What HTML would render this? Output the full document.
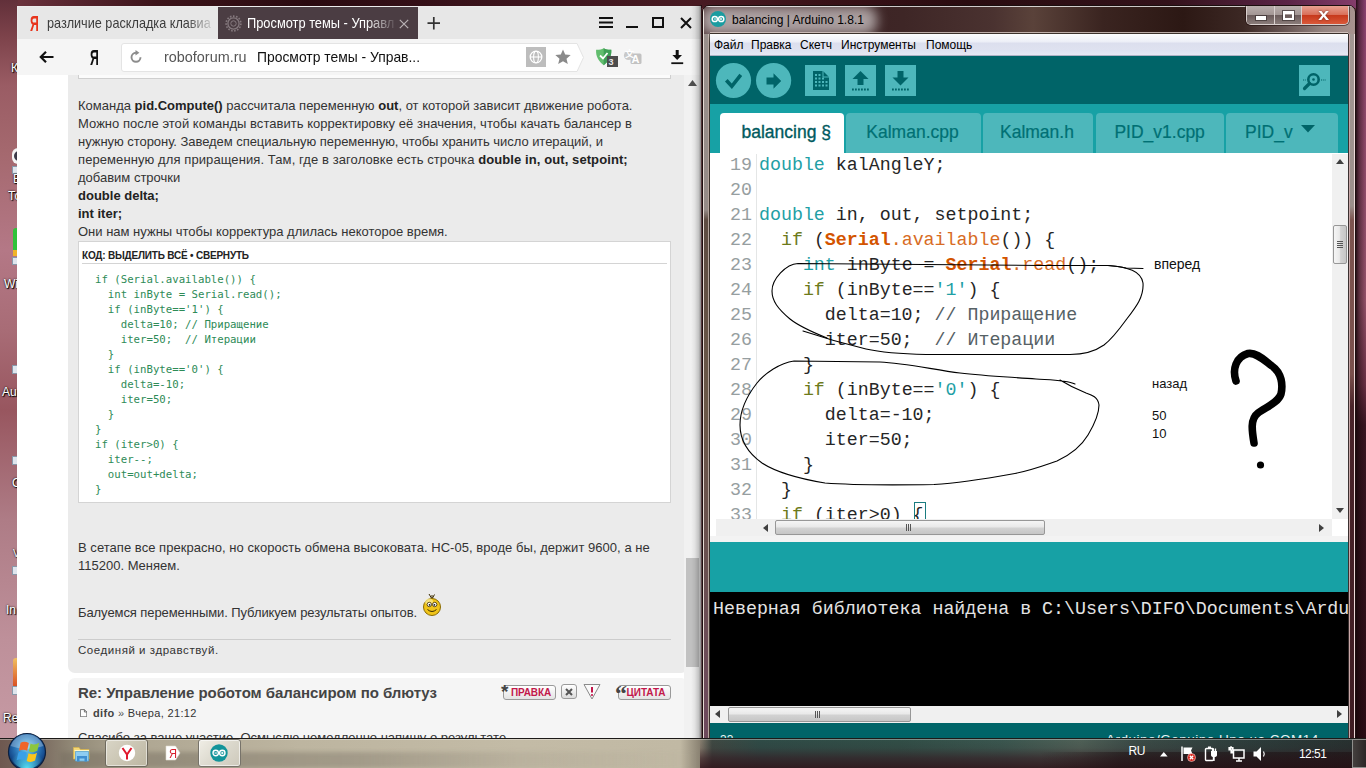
<!DOCTYPE html>
<html lang="ru"><head><meta charset="utf-8"><title>desktop</title>
<style>
*{box-sizing:border-box;margin:0;padding:0}
html,body{width:1366px;height:768px;overflow:hidden}
body{position:relative;font-family:"Liberation Sans","DejaVu Sans",sans-serif;background:#2b0e12}
.abs{position:absolute}
#desk{left:0;top:0;width:1366px;height:768px;background:linear-gradient(180deg,#62303a 0,#7c424a 35px,#9a5c64 85px,#a4686e 150px,#b47886 250px,#a86c76 330px,#98565f 410px,#ae7c86 520px,#be909a 640px,#c69aa4 740px)}
#deskR{left:1356px;top:0;width:10px;height:768px;background:linear-gradient(90deg,rgba(20,5,8,.85) 0,rgba(20,5,8,.45) 3px,rgba(20,5,8,0) 10px),linear-gradient(180deg,#8a4070 0,#90486c 80px,#95526a 300px,#6a3044 385px,#3a1622 425px,#2a0c14 768px)}
#deskTop{left:18px;top:0;width:1348px;height:8px;background:linear-gradient(90deg,#6a323c 0,#582630 50px,#3c141a 140px,#2a0a10 290px,#38121a 440px,#481a22 680px,#3a1218 800px,#2a0c10 950px,#33121a 1150px,#5a2446 1270px,#8a4070 1348px)}
/* ---------- browser ---------- */
#br{left:18px;top:7px;width:683px;height:733px;background:#fff;overflow:hidden}
#br .tabs{left:0;top:0;width:683px;height:32px;background:#e7e7e7}
#br .tab1{left:0;top:0;width:200px;height:32px;font-size:15px;color:#3c3c3c;line-height:32px;white-space:nowrap;overflow:hidden}
#br .tab2{left:200px;top:0;width:200px;height:32px;background:#4b3d43;color:#fff;font-size:15px;line-height:32px;white-space:nowrap;overflow:hidden}
#br .bar{left:0;top:32px;width:683px;height:36px;background:#f5f5f5}
#br .addr{left:104px;top:36px;width:452px;height:28px;background:#fff}
#br .page{left:0;top:68px;width:666px;height:665px;background:#fff;overflow:hidden}
#br .post{left:50px;top:0;width:620px;height:598px;background:#ebebeb;border-radius:0 0 7px 7px}
#br .post2{left:50px;top:603px;width:620px;height:80px;background:#f5f5f5;border-radius:7px 7px 0 0}
.ft{font-family:"Liberation Sans","DejaVu Sans",sans-serif;font-size:13px;color:#333;white-space:nowrap;line-height:18px}
.ft b{color:#222}
/* ---------- arduino ---------- */
#ar{left:702px;top:5px;width:654px;height:740px;border-radius:7px 7px 0 0;overflow:hidden;border:1px solid #1c0e0e;
background:
 linear-gradient(90deg,#e6dad4 0,#e6dad4 1px,rgba(0,0,0,0) 1px) 0 0/2px 100% no-repeat,
 linear-gradient(90deg,#6b5848 0,#6b5848 4px,#b5a59d 4px,#b5a59d 5px,#3c322c 5px,#3c322c 6px,rgba(0,0,0,0) 6px) 1px 28px/7px 100% no-repeat,
 linear-gradient(90deg,#3a3030 0,#3a3030 1px,#c8a8a8 1px,#c8a8a8 2px,#7a504c 2px,#7a504c 6px,#ecd8d8 6px) 645px 28px/7px 100% no-repeat,
 linear-gradient(180deg,rgba(255,255,255,.75) 0,rgba(255,255,255,.75) 1px,rgba(255,255,255,0) 1px) 0 0/100% 2px no-repeat,
 linear-gradient(90deg,#4a3032 0,#3c2224 120px,#3e2626 200px,#4a3230 290px,#5a423a 330px,#3a2420 400px,#2c1814 480px,#3c2824 540px,#6a5856 585px,#94837f 620px,#a8938f 652px)}
#ar .cl{left:7px;top:28px;width:638px;height:711px;background:#fff;overflow:hidden;box-shadow:0 -1px 0 #3c322c,0 -2px 0 rgba(220,205,200,.8)}
.mono{font-family:"Liberation Mono","DejaVu Sans Mono",monospace}
/* ---------- taskbar ---------- */
#tb{left:0;top:738px;width:1366px;height:30px;background:#6b5a52}
.tfade{-webkit-mask-image:linear-gradient(90deg,#000 0,#000 165px,transparent 200px);mask-image:linear-gradient(90deg,#000 0,#000 165px,transparent 200px)}
.ln{font-size:18.3px;line-height:25px;color:#969ea0;text-align:right;white-space:pre}
.cd{font-size:18.3px;line-height:25px;color:#262626}
.cd i{font-style:normal}.cd b{font-weight:bold}
.k1{color:#1fa0a5}.k2{color:#6c7a1a}.k3{color:#d35400}.k4{color:#d86c24}.k5{color:#1fa0a5}.k6{color:#566165}
</style></head><body>
<div id="desk" class="abs"></div>
<div id="deskTop" class="abs"></div>
<div id="deskR" class="abs"></div>

<div id="dicons" class="abs" style="left:0;top:0;width:18px;height:740px;overflow:hidden;font-size:12px;line-height:14px;color:#fff;text-shadow:1px 1px 1px #000,0 0 2px #000;white-space:nowrap">
 <div class="abs" style="left:11px;top:61px">К</div>
 <div class="abs" style="left:12px;top:148px;width:12px;height:16px;border-radius:6px 0 0 6px;background:#f4f4f4"></div>
 <div class="abs" style="left:14px;top:151px;width:10px;height:10px;border-radius:5px 0 0 5px;background:#3a3a48"></div>
 <div class="abs" style="left:12px;top:166px;width:8px;height:8px;background:#dfe6ee;border:1px solid #8899aa"></div>
 <div class="abs" style="left:13px;top:172px">Е</div>
 <div class="abs" style="left:8px;top:189px">То</div>
 <div class="abs" style="left:13px;top:228px;width:8px;height:22px;background:#2fc23a;border-radius:3px 0 0 0"></div>
 <div class="abs" style="left:13px;top:250px;width:8px;height:6px;background:#f0b428"></div>
 <div class="abs" style="left:12px;top:257px;width:8px;height:8px;background:#dfe6ee;border:1px solid #8899aa"></div>
 <div class="abs" style="left:4px;top:277px">Wi</div>
 <div class="abs" style="left:12px;top:365px;width:8px;height:9px;background:#dfe6ee;border:1px solid #8899aa"></div>
 <div class="abs" style="left:2px;top:385px">Au</div>
 <div class="abs" style="left:12px;top:456px;width:8px;height:9px;background:#dfe6ee;border:1px solid #8899aa"></div>
 <div class="abs" style="left:12px;top:476px">С</div>
 <div class="abs" style="left:13px;top:547px;font-size:10px">V</div>
 <div class="abs" style="left:12px;top:566px;width:8px;height:9px;background:#dfe6ee;border:1px solid #8899aa"></div>
 <div class="abs" style="left:6px;top:603px">In</div>
 <div class="abs" style="left:13px;top:658px;width:8px;height:30px;background:linear-gradient(180deg,#f0c060,#d84a20);border-radius:3px 0 0 3px"></div>
 <div class="abs" style="left:12px;top:686px;width:8px;height:9px;background:#dfe6ee;border:1px solid #8899aa"></div>
 <div class="abs" style="left:3px;top:711px">Re</div>
</div>
<div class="abs" style="left:17px;top:6px;width:684px;height:1px;background:#ececec"></div>
<div class="abs" style="left:17px;top:6px;width:1px;height:732px;background:linear-gradient(180deg,#ececec 0,#ececec 33px,#f5f5f5 33px,#f5f5f5 69px,#fff 69px)"></div>
<!-- BROWSER -->
<div id="br" class="abs">
 <div class="tabs abs"></div>
 <div class="tab1 abs"><span class="abs" style="left:11.500px;top:1px;color:#e8341c;font-size:21.500px;font-weight:bold;transform:scaleX(.57);transform-origin:0 50%">Я</span><span class="abs tfade" style="left:29px;top:0;transform:scaleX(.845);transform-origin:0 50%">различие раскладка клавиа</span></div>
 <div class="tab2 abs">
  <svg class="abs" style="left:7px;top:8px" width="17" height="17" viewBox="0 0 17 17"><circle cx="8.5" cy="8.5" r="5.6" fill="none" stroke="#85797e" stroke-width="1.3"/><circle cx="8.5" cy="8.5" r="7.4" fill="none" stroke="#85797e" stroke-width="1.6" stroke-dasharray="1.6 1.5"/><circle cx="8.5" cy="8.5" r="2.7" fill="none" stroke="#85797e" stroke-width="1"/></svg>
  <span class="abs" style="left:29px;top:0;transform:scaleX(.855);transform-origin:0 50%">Просмотр темы - Управл</span>
  <div class="abs" style="left:148px;top:0;width:32px;height:32px;background:linear-gradient(90deg,rgba(75,61,67,0),#4b3d43)"></div>
  <svg class="abs" style="left:181px;top:12px" width="10" height="10" viewBox="0 0 10 10"><path d="M.800 .800 L9.200 9.200 M9.200 .800 L.800 9.200" stroke="#b9b2b5" stroke-width="1.200" fill="none"/></svg>
 </div>
 <svg class="abs" style="left:407px;top:7px" width="18" height="18" viewBox="0 0 18 18"><path d="M8.800 3 V15.500 M2.500 9.200 H15" stroke="#333" stroke-width="1.700" fill="none"/></svg>
 <!-- window controls -->
 <svg class="abs" style="left:575px;top:6px" width="100" height="20" viewBox="0 0 100 20"><path d="M6 5 H20 M6 9.5 H20 M6 14 H20" stroke="#111" stroke-width="2" fill="none"/><path d="M33 14 H45" stroke="#111" stroke-width="2" fill="none"/><rect x="60" y="5" width="10" height="9" fill="none" stroke="#111" stroke-width="2"/><path d="M88 5 L98 15 M98 5 L88 15" stroke="#111" stroke-width="2" fill="none"/></svg>
 <div class="bar abs"></div>
 <!-- back arrow -->
 <svg class="abs" style="left:20px;top:41px" width="18" height="18" viewBox="0 0 18 18"><path d="M15.500 9 H3 M8 3.800 L2.800 9 L8 14.200" stroke="#111" stroke-width="2.200" fill="none"/></svg>
 <span class="abs" style="left:71.500px;top:38.500px;font-size:21.500px;line-height:24px;color:#111;font-weight:bold;transform:scaleX(.57);transform-origin:0 50%">Я</span>
 <svg class="abs" style="left:103px;top:36px" width="465" height="29" viewBox="0 0 465 29"><path d="M3 .5 H456 L462.500 14.500 L456 28.500 H3 A2.5 2.5 0 0 1 .5 26 V3 A2.5 2.5 0 0 1 3 .5Z" fill="#fff" stroke="#e4e4e4" stroke-width="1"/></svg>
 <svg class="abs" style="left:111px;top:43px" width="14" height="14" viewBox="0 0 14 14"><path d="M11.500 7.300 A4.500 4.500 0 1 1 7 2.800" stroke="#8c8c8c" stroke-width="1.900" fill="none"/><path d="M6.500 0 L10.400 2.800 L6.500 5.600Z" fill="#8c8c8c"/></svg>
 <span class="abs" style="left:146px;top:40px;font-size:15px;line-height:20px;color:#555;white-space:nowrap;transform:scaleX(.96);transform-origin:0 50%">roboforum.ru</span>
 <span class="abs" style="left:239px;top:40px;font-size:15px;line-height:20px;color:#111;white-space:nowrap;transform:scaleX(.925);transform-origin:0 50%">Просмотр темы - Управ...</span>
 <div class="abs" style="left:508px;top:40px;width:20px;height:20px;background:#bdbdbd"></div>
 <svg class="abs" style="left:510px;top:42px" width="16" height="16" viewBox="0 0 16 16"><circle cx="8" cy="8" r="5.800" fill="none" stroke="#fff" stroke-width="1.300"/><ellipse cx="8" cy="8" rx="2.400" ry="5.800" fill="none" stroke="#fff" stroke-width="1.100"/><path d="M2.500 8 H13.500" stroke="#fff" stroke-width="1.100" fill="none"/></svg>
 <svg class="abs" style="left:536px;top:41px" width="18" height="18" viewBox="0 0 18 18"><path d="M9 1.5 L11.2 6.6 L16.7 7.1 L12.5 10.7 L13.8 16.1 L9 13.2 L4.2 16.1 L5.5 10.7 L1.3 7.1 L6.8 6.6Z" fill="#8a8a8a"/></svg>
 <!-- shield -->
 <svg class="abs" style="left:577px;top:40px" width="26" height="22" viewBox="0 0 26 22"><path d="M8.700 1.200 C11 2.600 13.800 3 16.300 2.800 C16.800 10 13.500 14.500 8.700 18.200 C4 14.500 .600 10 1.100 2.800 C3.600 3 6.400 2.600 8.700 1.200Z" fill="#62bd6e"/><path d="M8.700 1.200 C11 2.600 13.800 3 16.300 2.800 C16.800 10 13.500 14.500 8.700 18.200Z" fill="#3f9f56"/><path d="M5 8.500 L8 11.500 L12.500 6" stroke="#fff" stroke-width="1.800" fill="none"/><rect x="12" y="9" width="11" height="11" fill="#4c4c4c"/></svg>
 <span class="abs" style="left:590.5px;top:49.5px;font-size:9px;line-height:10px;color:#e8e8e8;font-weight:bold">3</span>
 <svg class="abs" style="left:605px;top:42px" width="20" height="18" viewBox="0 0 20 18"><rect x="7.500" y="4.500" width="11" height="10.500" rx="1.500" fill="#c2c2c2"/><circle cx="5.500" cy="6.500" r="4.600" fill="#c9c9c9"/></svg>
 <span class="abs" style="left:613.5px;top:46px;font-size:11px;line-height:12px;color:#fff;font-weight:bold">A</span>
 <span class="abs" style="left:607px;top:42px;font-size:9px;line-height:10px;color:#fff;font-weight:bold;font-family:'Liberation Sans','Noto Sans CJK SC',sans-serif">文</span>
 <svg class="abs" style="left:649px;top:41px" width="20" height="18" viewBox="667 48 20 18"><path d="M675.700 50 H678.700 V55 H682 L677.200 60 L672.400 55 H675.700Z" fill="#111"/><path d="M671.300 63.200 H683.200" stroke="#111" stroke-width="1.800" fill="none"/></svg>
 <div class="page abs">
  <div class="post abs">
   <div class="ft abs" style="left:10px;top:22px;">Команда <b>pid.Compute()</b> рассчитала переменную <b>out</b>, от которой зависит движение робота.</div>
   <div class="ft abs" style="left:10px;top:40px;letter-spacing:0.035px">Можно после этой команды вставить корректировку её значения, чтобы качать балансер в</div>
   <div class="ft abs" style="left:10px;top:58px;letter-spacing:-0.045px">нужную сторону. Заведем специальную переменную, чтобы хранить число итераций, и</div>
   <div class="ft abs" style="left:10px;top:76px;letter-spacing:0.09px">переменную для приращения. Там, где в заголовке есть строчка <b>double in, out, setpoint;</b></div>
   <div class="ft abs" style="left:10px;top:94px;">добавим строчки</div>
   <div class="ft abs" style="left:10px;top:112px;"><b>double delta;</b></div>
   <div class="ft abs" style="left:10px;top:130px;"><b>int iter;</b></div>
   <div class="ft abs" style="left:10px;top:148px;">Они нам нужны чтобы корректура длилась некоторое время.</div>
   <div class="abs" style="left:10px;top:166px;width:593px;height:262px;background:#fff;border:1px solid #d4d4d4"></div>
   <div class="abs" style="left:14px;top:174.5px;font-size:10px;line-height:12px;font-weight:bold;color:#222;letter-spacing:-.2px;white-space:nowrap">КОД: ВЫДЕЛИТЬ ВСЁ • СВЕРНУТЬ</div>
   <div class="abs" style="left:14px;top:188px;width:585px;height:1px;background:#d4d4d4"></div>
   <pre class="abs" style="left:27px;top:197px;font-family:'DejaVu Sans Mono','Liberation Mono',monospace;font-size:10.7px;line-height:15px;color:#2e8b57">if (Serial.available()) {
  int inByte = Serial.read();
  if (inByte=='1') {
    delta=10; // Приращение
    iter=50;  // Итерации
  }
  if (inByte=='0') {
    delta=-10;
    iter=50;
  }
}
if (iter>0) {
  iter--;
  out=out+delta;
}</pre>
   <div class="ft abs" style="left:10px;top:464px;letter-spacing:0.04px">В сетапе все прекрасно, но скорость обмена высоковата. НС-05, вроде бы, держит 9600, а не</div>
   <div class="ft abs" style="left:10px;top:482px;">115200. Меняем.</div>
   <div class="ft abs" style="left:10px;top:529px;;letter-spacing:-.08px">Балуемся переменными. Публикуем результаты опытов.</div>
   <svg class="abs" style="left:354px;top:518px" width="20" height="24" viewBox="0 0 20 24"><path d="M10 6 L7 1 M10 6 L12.5 1.5 M10 6 L10 2" stroke="#3a2a00" stroke-width="1" fill="none"/><circle cx="10" cy="14" r="8.5" fill="#f0c419" stroke="#8a6a00" stroke-width="1"/><ellipse cx="7" cy="8.5" rx="4" ry="3" fill="#fdf1a0" opacity=".7"/><circle cx="7.3" cy="11.5" r="2.2" fill="#fff" stroke="#3a2a00" stroke-width=".8"/><circle cx="12.7" cy="11.5" r="2.2" fill="#fff" stroke="#3a2a00" stroke-width=".8"/><circle cx="7.6" cy="11.8" r=".9" fill="#111"/><circle cx="12.4" cy="11.8" r=".9" fill="#111"/><path d="M5.5 16.5 Q10 20.5 14.5 16.5" stroke="#3a2a00" stroke-width="1" fill="none"/></svg>
   <div class="abs" style="left:10px;top:564px;width:593px;height:1px;background:#ccc"></div>
   <div class="abs" style="left:10px;top:568px;font-size:11.500px;line-height:14px;color:#333;letter-spacing:.55px;white-space:nowrap">Соединяй и здравствуй.</div>
  </div>
  <div class="abs" style="left:60px;top:0;width:593px;height:4px;border:1px solid #cfcfcf;border-top:0;background:#fbfbfb"></div>
  <div class="post2 abs">
   <div class="abs" style="left:10px;top:6px;font-size:15px;line-height:18px;font-weight:bold;color:#444;white-space:nowrap;letter-spacing:-.05px">Re: Управление роботом балансиром по блютуз</div>
   <svg class="abs" style="left:11.500px;top:31px" width="7.200" height="8.400" viewBox="0 0 9 10"><path d="M.5 .5 H5.5 L8.5 3.5 V9.5 H.5Z" fill="#fff" stroke="#555" stroke-width="1"/><path d="M5.5 .5 V3.5 H8.5" fill="none" stroke="#555" stroke-width="1"/></svg>
   <div class="abs" style="left:25px;top:28px;font-size:11px;line-height:14px;color:#333;white-space:nowrap;letter-spacing:.35px"><b style="color:#444">difo</b> <span style="color:#555">»</span> Вчера, 21:12</div>
   <div class="ft abs" style="left:10px;top:51px">Спасибо за ваше участие. Осмыслю немедленно напишу о результате</div>
   <div class="abs" style="left:435px;top:7px;width:53px;height:15px;border:1px solid #9a9a9a;border-radius:3px;background:linear-gradient(180deg,#fff,#e4e4e4);font-size:10px;line-height:13px;font-weight:bold;color:#c2184b;text-align:center;letter-spacing:-.1px;text-indent:3px">ПРАВКА</div>
   <div class="abs" style="left:433px;top:4px;font-size:19px;line-height:20px;font-weight:bold;color:#444;font-family:'Liberation Sans','DejaVu Sans',sans-serif">*</div>
   <div class="abs" style="left:493px;top:6px;width:16px;height:15px;border:1px solid #9a9a9a;border-radius:3px;background:linear-gradient(180deg,#fff,#dcdcdc)"></div>
   <svg class="abs" style="left:497px;top:10px" width="8" height="8" viewBox="0 0 8 8"><path d="M1 1 L7 7 M7 1 L1 7" stroke="#555" stroke-width="2" fill="none"/></svg>
   <svg class="abs" style="left:515px;top:5px" width="18" height="17" viewBox="0 0 18 17"><path d="M1 1.5 H17 L9 16Z" fill="#fafafa" stroke="#8a8a8a" stroke-width="1"/><path d="M9 4 V9.5" stroke="#c2184b" stroke-width="2" fill="none"/><circle cx="9" cy="12" r="1.1" fill="#c2184b"/></svg>
   <div class="abs" style="left:550px;top:7px;width:53px;height:15px;border:1px solid #9a9a9a;border-radius:3px;background:linear-gradient(180deg,#fff,#e4e4e4);font-size:10px;line-height:13px;font-weight:bold;color:#c2184b;text-align:center;letter-spacing:-.1px;text-indent:3px">ЦИТАТА</div>
   <div class="abs" style="left:547px;top:3px;font-size:24px;line-height:24px;font-weight:bold;color:#444;font-family:'Liberation Serif','DejaVu Serif',serif">“</div>
  </div>
 </div>
 <!-- scrollbar -->
 <div class="abs" style="left:666px;top:68px;width:17px;height:665px;background:#f1f1f1"></div>
 <svg class="abs" style="left:670px;top:73px" width="9" height="6" viewBox="0 0 9 6"><path d="M0 6 L4.5 0 L9 6Z" fill="#505050"/></svg>
 <div class="abs" style="left:668px;top:551px;width:13px;height:109px;background:#c1c1c1"></div>
</div>

<div class="abs" style="left:691px;top:5px;width:11px;height:733px;background:linear-gradient(90deg,rgba(0,0,0,0) 0,rgba(0,0,0,.06) 35%,rgba(0,0,0,.2) 72%,rgba(0,0,0,.55) 100%)"></div>
<!-- ARDUINO -->
<div id="ar" class="abs">
 <div class="abs" style="left:-2px;top:0px;width:176px;height:29px;border-radius:12px;background:rgba(255,255,255,.56);filter:blur(6px)"></div>
 <svg class="abs" style="left:7px;top:5px" width="16" height="16" viewBox="0 0 16 16"><circle cx="8" cy="8" r="8" fill="#1a9ca0"/><circle cx="4.800" cy="8" r="2.600" fill="none" stroke="#fff" stroke-width="1.500"/><circle cx="11.200" cy="8" r="2.600" fill="none" stroke="#fff" stroke-width="1.500"/><path d="M4 8 H6 M10 8 H12 M11 7 V9" stroke="#fff" stroke-width=".9"/></svg>
 <div class="abs" style="left:29px;top:7px;font-size:12px;line-height:14px;color:#000;white-space:nowrap">balancing | Arduino 1.8.1</div>
 <div class="abs" style="left:543px;top:0px;width:103px;height:19px;border:1px solid #d8cfcd;border-top:0;border-radius:0 0 5px 5px;overflow:hidden;box-shadow:0 0 0 1px rgba(30,10,10,.55)">
  <div class="abs" style="left:0;top:0;width:28px;height:18px;background:linear-gradient(180deg,#b9aeac 0,#a39795 48%,#6a5b5a 52%,#8a7c7a 100%);border-right:1px solid #d8cfcd"></div>
  <div class="abs" style="left:28px;top:0;width:27px;height:18px;background:linear-gradient(180deg,#b9aeac 0,#a39795 48%,#6a5b5a 52%,#8a7c7a 100%);border-right:1px solid #d8cfcd"></div>
  <div class="abs" style="left:55px;top:0;width:46px;height:18px;background:linear-gradient(180deg,#e7a091 0,#d9705a 48%,#c7391c 52%,#d9593a 100%)"></div>
  <div class="abs" style="left:9px;top:10px;width:10px;height:4px;background:#fff;box-shadow:0 0 0 1px rgba(60,50,50,.7)"></div>
  <div class="abs" style="left:36px;top:5px;width:11px;height:9px;border:2px solid #fff;border-top-width:3px;box-shadow:0 0 0 1px rgba(60,50,50,.7)"></div>
  <div class="abs" style="left:72px;top:0px;font-size:17px;line-height:18px;font-weight:bold;color:#fff;text-shadow:0 0 2px #5a2a20;transform:scaleX(1.15)">x</div>
 </div>
<div class="abs" style="left:1px;top:28px;width:4px;height:712px;background:linear-gradient(180deg,#9a908c 0,#958b87 176px,#5e4c42 186px,#6b5848 370px,#6a5050 530px,#6e4a5c 680px)"></div>
 <div class="abs" style="left:647px;top:28px;width:4px;height:712px;background:linear-gradient(180deg,#a39793 0,#9c8f8b 172px,#7d544f 186px,#7a504c 340px,#4a242a 372px,#3e1c22 712px)"></div>
 <div class="cl abs">
  <div class="abs" style="left:0;top:0;width:638px;height:22px;background:linear-gradient(180deg,#fdfdfe 0,#eef0f8 35%,#dcdfee 45%,#dfe2f0 80%,#e6e8f3 100%);border-bottom:1px solid #aeb1c4"></div>
  <div class="abs" style="left:4px;top:4px;font-size:12px;line-height:14px;color:#000;white-space:nowrap">Файл</div>
  <div class="abs" style="left:41px;top:4px;font-size:12px;line-height:14px;color:#000;white-space:nowrap">Правка</div>
  <div class="abs" style="left:90px;top:4px;font-size:12px;line-height:14px;color:#000;white-space:nowrap">Скетч</div>
  <div class="abs" style="left:131px;top:4px;font-size:12px;line-height:14px;color:#000;white-space:nowrap">Инструменты</div>
  <div class="abs" style="left:216px;top:4px;font-size:12px;line-height:14px;color:#000;white-space:nowrap">Помощь</div>
  <div class="abs" style="left:0;top:22px;width:638px;height:48px;background:#006468"></div>
  <svg class="abs" style="left:0;top:22px" width="638" height="48" viewBox="710 56 638 48">
   <circle cx="733.500" cy="80.500" r="17.600" fill="#4db7bb"/><path d="M726.300 80.300 L731.800 86.300 L740.800 74.800" stroke="#006468" stroke-width="3.600" fill="none"/>
   <circle cx="773.600" cy="80.500" r="17.600" fill="#4db7bb"/><path d="M766.500 77.500 H773.500 V73.300 L781.200 81 L773.500 88.700 V84.500 H766.500Z" fill="#006468"/>
   <rect x="805" y="65" width="31" height="31" fill="#4db7bb"/><path d="M813 71 H823 L829 77 V90 H813Z" fill="#006468"/><path d="M823 71 V77 H829" fill="none" stroke="#4db7bb" stroke-width="1"/>
   <g fill="#4db7bb"><rect x="815" y="74" width="2" height="2"/><rect x="818.5" y="74" width="2" height="2"/><rect x="815" y="77.500" width="2" height="2"/><rect x="818.5" y="77.5" width="2" height="2"/><rect x="822" y="77.5" width="2" height="2"/><rect x="815" y="81" width="2" height="2"/><rect x="818.5" y="81" width="2" height="2"/><rect x="822" y="81" width="2" height="2"/><rect x="825.5" y="81" width="2" height="2"/><rect x="815" y="84.500" width="2" height="2"/><rect x="818.5" y="84.5" width="2" height="2"/><rect x="822" y="84.5" width="2" height="2"/><rect x="825.5" y="84.5" width="2" height="2"/></g>
   <rect x="845" y="65" width="31" height="31" fill="#4db7bb"/><path d="M860.5 71 L868.5 79 H863.5 V85 H857.5 V79 H852.5Z" fill="#006468"/><path d="M852 89.500 H869" stroke="#006468" stroke-width="1.800" stroke-dasharray="1.800 1.200" fill="none"/>
   <rect x="885" y="65" width="31" height="31" fill="#4db7bb"/><path d="M900.5 85.500 L908.5 77.5 H903.5 V71 H897.5 V77.5 H892.5Z" fill="#006468"/><path d="M892 89.500 H909" stroke="#006468" stroke-width="1.800" stroke-dasharray="1.800 1.200" fill="none"/>
   <rect x="1299" y="65" width="31" height="31" fill="#4db7bb"/><circle cx="1313.500" cy="79.500" r="5.2" fill="none" stroke="#006468" stroke-width="2.6"/><circle cx="1313.5" cy="79.5" r="1.3" fill="#006468"/><path d="M1309.5 83.500 L1304.5 88.5" stroke="#006468" stroke-width="3.2" stroke-linecap="round"/><path d="M1303 80 H1306 M1321 80 H1326" stroke="#006468" stroke-width="1.2" stroke-dasharray="1.2 1"/>
  </svg>
  <div class="abs" style="left:0;top:70px;width:638px;height:49px;background:#17a1a5"></div>
  <div class="abs" style="left:10px;top:79px;width:124px;height:40px;background:#fff;border-radius:4px 4px 0 0"></div>
  <div class="abs" style="left:31.5px;top:87px;font-size:17.5px;line-height:22px;color:#005a5e;white-space:nowrap;-webkit-text-stroke:.35px #005a5e">balancing §</div>
  <div class="abs" style="left:135.5px;top:79px;width:135.0px;height:40px;background:#4db7bb;border-radius:4px 4px 0 0"></div>
  <div class="abs" style="left:156.29999999999995px;top:87px;font-size:17.5px;line-height:22px;color:#007074;white-space:nowrap;-webkit-text-stroke:.2px #007074">Kalman.cpp</div>
  <div class="abs" style="left:272.5px;top:79px;width:110.79999999999995px;height:40px;background:#4db7bb;border-radius:4px 4px 0 0"></div>
  <div class="abs" style="left:290px;top:87px;font-size:17.5px;line-height:22px;color:#007074;white-space:nowrap;-webkit-text-stroke:.2px #007074">Kalman.h</div>
  <div class="abs" style="left:385.5px;top:79px;width:128.9000000000001px;height:40px;background:#4db7bb;border-radius:4px 4px 0 0"></div>
  <div class="abs" style="left:404.4000000000001px;top:87px;font-size:17.5px;line-height:22px;color:#007074;white-space:nowrap;-webkit-text-stroke:.2px #007074">PID_v1.cpp</div>
  <div class="abs" style="left:516.3px;top:79px;width:111.29999999999995px;height:40px;background:#4db7bb;border-radius:4px 4px 0 0"></div>
  <div class="abs" style="left:535px;top:87px;font-size:17.5px;line-height:22px;color:#007074;white-space:nowrap;-webkit-text-stroke:.2px #007074">PID_v</div>
  <svg class="abs" style="left:591px;top:91px" width="14" height="8" viewBox="0 0 14 8"><path d="M0 0 H14 L7 7.500Z" fill="#006468"/></svg>
  <div class="abs" style="left:0;top:120px;width:638px;height:365px;background:#fff;overflow:hidden">
   <div class="abs" style="left:46px;top:0;width:1px;height:366px;background:#e4e6e6"></div>
   <div class="mono abs ln" style="left:0;top:-1px;width:42px">19</div><pre class="mono abs cd" style="left:49px;top:-1px"><i class="k1">double</i> kalAngleY;</pre>
   <div class="mono abs ln" style="left:0;top:24px;width:42px">20</div><pre class="mono abs cd" style="left:49px;top:24px"></pre>
   <div class="mono abs ln" style="left:0;top:49px;width:42px">21</div><pre class="mono abs cd" style="left:49px;top:49px"><i class="k1">double</i> in, out, setpoint;</pre>
   <div class="mono abs ln" style="left:0;top:74px;width:42px">22</div><pre class="mono abs cd" style="left:49px;top:74px">  <i class="k2">if</i> (<b class="k3">Serial</b><i class="k4">.available</i>()) {</pre>
   <div class="mono abs ln" style="left:0;top:99px;width:42px">23</div><pre class="mono abs cd" style="left:49px;top:99px">    <i class="k1">int</i> inByte = <b class="k3">Serial</b><i class="k4">.read</i>();</pre>
   <div class="mono abs ln" style="left:0;top:124px;width:42px">24</div><pre class="mono abs cd" style="left:49px;top:124px">    <i class="k2">if</i> (inByte==<i class="k5">'1'</i>) {</pre>
   <div class="mono abs ln" style="left:0;top:149px;width:42px">25</div><pre class="mono abs cd" style="left:49px;top:149px">      delta=10; <i class="k6">// Приращение</i></pre>
   <div class="mono abs ln" style="left:0;top:174px;width:42px">26</div><pre class="mono abs cd" style="left:49px;top:174px">      iter=50;  <i class="k6">// Итерации</i></pre>
   <div class="mono abs ln" style="left:0;top:199px;width:42px">27</div><pre class="mono abs cd" style="left:49px;top:199px">    }</pre>
   <div class="mono abs ln" style="left:0;top:224px;width:42px">28</div><pre class="mono abs cd" style="left:49px;top:224px">    <i class="k2">if</i> (inByte==<i class="k5">'0'</i>) {</pre>
   <div class="mono abs ln" style="left:0;top:249px;width:42px">29</div><pre class="mono abs cd" style="left:49px;top:249px">      delta=-10;</pre>
   <div class="mono abs ln" style="left:0;top:274px;width:42px">30</div><pre class="mono abs cd" style="left:49px;top:274px">      iter=50;</pre>
   <div class="mono abs ln" style="left:0;top:299px;width:42px">31</div><pre class="mono abs cd" style="left:49px;top:299px">    }</pre>
   <div class="mono abs ln" style="left:0;top:324px;width:42px">32</div><pre class="mono abs cd" style="left:49px;top:324px">  }</pre>
   <div class="mono abs ln" style="left:0;top:349px;width:42px">33</div><pre class="mono abs cd" style="left:49px;top:349px">  <i class="k2">if</i> (iter&gt;0) {</pre>
   <div class="abs" style="left:203.5px;top:348px;width:12px;height:20px;border:1px solid #1a7c80"></div>
   <div class="abs" style="left:444px;top:102px;font-size:14px;line-height:16px;color:#111;white-space:nowrap">вперед</div>
   <div class="abs" style="left:442px;top:222px;font-size:13px;line-height:16px;color:#111;white-space:nowrap">назад</div>
   <div class="abs" style="left:442px;top:254px;font-size:13px;line-height:16px;color:#111;white-space:nowrap">50</div>
   <div class="abs" style="left:442px;top:272px;font-size:13px;line-height:16px;color:#111;white-space:nowrap">10</div>
   <svg class="abs" style="left:0;top:0" width="622" height="366" viewBox="710 153 622 366" fill="none" stroke="#000" stroke-width="1.1" stroke-linecap="round" stroke-linejoin="round">
    <path d="M827 337 C812 331 800 326 790 318 C778 308 772 300 772 290 C772 278 786 263 798 262.500 L1040 264.500 L1108 264.500 C1116 265 1122 266 1126 267 L1143 267.500"/>
    <path d="M1108 264.500 C1128 266 1141 270 1143 282 C1144 296 1136 306 1126 319 C1118 330 1112 338 1104 344 C1094 351 1084 353.500 1070 353.500 L926 353.500 C905 353 884 352 866 348 C845 343 830 339 803 330"/>
    <path d="M1075 383 C1066 379 1050 379 1036 378 C1010 376 985 375 960 372 C935 369 905 362 880 361 L794 360 C780 362 765 372 757 382 C746 396 740 410 740 424 C740 440 748 452 762 462 C776 471 795 477 825 482 C850 484 900 484 934 483.500 C960 482 990 477 1012 473 C1030 470 1045 464 1057 460 C1070 454 1082 444 1088 434 C1094 424 1099 412 1099 404 C1098 396 1092 394 1086 392 C1076 388 1068 384 1060 379"/>
    <path d="M1236 380 C1232 368 1236 356 1248 352.500 C1256 351 1264 359 1272 365 C1282 372 1283 384 1281 393 C1278 402 1266 406 1258 412 C1250 418 1252 430 1254 442" stroke-width="7.600"/>
    <circle cx="1260.500" cy="464" r="3.600" fill="#000" stroke="none"/>
   </svg>
   <div class="abs" style="left:622px;top:0;width:16px;height:366px;background:#f0f0f0"></div>
   <svg class="abs" style="left:626px;top:5px" width="8" height="5" viewBox="0 0 8 5"><path d="M0 5 L4 0 L8 5Z" fill="#404040"/></svg>
   <svg class="abs" style="left:626px;top:354px" width="8" height="5" viewBox="0 0 8 5"><path d="M0 0 L4 5 L8 0Z" fill="#404040"/></svg>
   <div class="abs" style="left:623px;top:71px;width:14px;height:39px;border:1px solid #979797;border-radius:2px;background:linear-gradient(90deg,#f5f5f5 0,#e9e9e9 45%,#d2d2d2 55%,#c6c6c6 100%)"></div>
   <div class="abs" style="left:627px;top:87px;width:6px;height:7px;background:repeating-linear-gradient(180deg,#555 0,#555 1px,transparent 1px,transparent 2px)"></div>
  </div>
  <div class="abs" style="left:6px;top:485px;width:616px;height:17px;background:#f0f0f0"></div>
  <div class="abs" style="left:0;top:502px;width:638px;height:6px;background:#f3f3f3"></div>
  <svg class="abs" style="left:53px;top:490px" width="5" height="8" viewBox="0 0 5 8"><path d="M5 0 L0 4 L5 8Z" fill="#404040"/></svg>
  <svg class="abs" style="left:609px;top:490px" width="5" height="8" viewBox="0 0 5 8"><path d="M0 0 L5 4 L0 8Z" fill="#404040"/></svg>
  <div class="abs" style="left:65px;top:486px;width:270px;height:15px;border:1px solid #979797;border-radius:2px;background:linear-gradient(180deg,#f5f5f5 0,#e9e9e9 45%,#d2d2d2 55%,#c6c6c6 100%)"></div>
  <div class="abs" style="left:196px;top:490px;width:5px;height:7px;background:repeating-linear-gradient(90deg,#555 0,#555 1px,transparent 1px,transparent 2px)"></div>
  <div class="abs" style="left:0;top:508px;width:638px;height:50px;background:#17a1a5"></div>
  <div class="abs" style="left:0;top:558px;width:638px;height:114px;background:#000;overflow:hidden"><pre class="mono abs" style="left:3px;top:6px;font-size:18.3px;line-height:22px;color:#e4e4e4">Неверная библиотека найдена в C:\Users\DIFO\Documents\Arduino\libraries</pre></div>
  <div class="abs" style="left:0;top:672px;width:638px;height:17px;background:#f0f0f0"></div>
  <svg class="abs" style="left:5px;top:676px" width="5" height="8" viewBox="0 0 5 8"><path d="M5 0 L0 4 L5 8Z" fill="#404040"/></svg>
  <svg class="abs" style="left:627px;top:676px" width="5" height="8" viewBox="0 0 5 8"><path d="M0 0 L5 4 L0 8Z" fill="#404040"/></svg>
  <div class="abs" style="left:18px;top:673px;width:183px;height:15px;border:1px solid #979797;border-radius:2px;background:linear-gradient(180deg,#f5f5f5 0,#e9e9e9 45%,#d2d2d2 55%,#c6c6c6 100%)"></div>
  <div class="abs" style="left:105px;top:677px;width:5px;height:7px;background:repeating-linear-gradient(90deg,#555 0,#555 1px,transparent 1px,transparent 2px)"></div>
  <div class="abs" style="left:0;top:689px;width:638px;height:30px;background:#006468"></div>
  <div class="abs" style="left:10px;top:699px;font-size:12px;line-height:14px;color:#e6f2f2;white-space:nowrap">33</div>
  <div class="abs" style="left:396px;top:699px;font-size:13.500px;line-height:14px;color:#e6f2f2;white-space:nowrap;letter-spacing:.5px">Arduino/Genuino Uno на COM14</div>
 </div>
</div>

<!-- TASKBAR -->
<div id="tb" class="abs">
 <div class="abs" style="left:0;top:0;width:1366px;height:30px;background:linear-gradient(90deg,#6e5850 0,#7a6b60 40px,#938b78 75px,#aea692 130px,#bdb5a0 300px,#c3bba6 520px,#c1b9a4 680px,#8a8272 700px,#3f4a44 712px,#2f4d48 760px,#315048 900px,#3a5850 1000px,#4f6258 1080px,#3c4e49 1130px,#2c3e3c 1250px,#26302f 1366px)"></div>
 <div class="abs" style="left:700px;top:0;width:666px;height:30px;background:linear-gradient(180deg,rgba(50,20,28,0) 0,rgba(50,20,28,.12) 10px,rgba(52,22,30,.6) 20px,rgba(48,20,26,.85) 30px)"></div>
 <div class="abs" style="left:1040px;top:14px;width:326px;height:16px;background:linear-gradient(90deg,rgba(25,12,14,0),rgba(25,12,14,.45) 80px)"></div>
 <div class="abs" style="left:60px;top:14px;width:640px;height:16px;background:linear-gradient(90deg,rgba(120,112,98,.55) 0,rgba(130,122,108,.45) 300px,rgba(150,142,128,.2) 460px,rgba(170,160,140,0) 640px);filter:blur(2px)"></div>
 <div class="abs" style="left:0;top:0;width:1366px;height:1px;background:#1c1a18"></div>
 <div class="abs" style="left:0;top:1px;width:1366px;height:1px;background:rgba(255,255,255,.35)"></div>
 <!-- start orb -->
 <svg class="abs" style="left:6px;top:-6px" width="42" height="40" viewBox="0 0 42 40"><defs><radialGradient id="og" cx="50%" cy="38%" r="62%"><stop offset="0" stop-color="#7fd0f0"/><stop offset=".45" stop-color="#2f7fc0"/><stop offset=".8" stop-color="#154a8c"/><stop offset="1" stop-color="#0b2750"/></radialGradient><radialGradient id="og2" cx="50%" cy="100%" r="55%"><stop offset="0" stop-color="#5ef0ff" stop-opacity=".95"/><stop offset="1" stop-color="#5ef0ff" stop-opacity="0"/></radialGradient></defs><circle cx="21" cy="20" r="18.500" fill="url(#og)" stroke="#0c1f3e" stroke-width="1.2"/><circle cx="21" cy="20" r="17" fill="url(#og2)"/><path d="M4.500 14 A17.500 17.500 0 0 1 37.500 14 Q21 20 4.500 14Z" fill="#fff" opacity=".28"/><g transform="translate(22.500 19.800) scale(1.130) translate(-19.500 -19.500)"><path d="M12.500 11.500 Q16 9.500 19.800 11.800 L18.300 18.600 Q15 16.800 11 18.500Z" fill="#f0642a"/><path d="M21.300 12.200 Q25 14 29 11.500 L27.300 18.500 Q23.500 20.800 19.800 19Z" fill="#8cc63e"/><path d="M10.600 20.200 Q14.500 18.400 18 20.300 L16.400 27 Q13 25.200 9 27Z" fill="#3aa0e8"/><path d="M19.500 20.800 Q23.300 22.700 27 20.300 L25.300 27.200 Q21.500 29.500 17.900 27.600Z" fill="#fbc51c"/></g></svg>
 <!-- explorer -->
 <svg class="abs" style="left:72px;top:7px" width="20" height="18" viewBox="0 0 20 18"><path d="M1.500 2.500 H7 L8.500 4.500 H17 V14 H1.500Z" fill="#f4d777" stroke="#d8b54e" stroke-width=".8"/><path d="M3.500 6.500 H16.500 V16 H3.500Z" fill="#8ecdf1" stroke="#5aa7d8" stroke-width=".8"/><path d="M5 11 H15 V16.500 H12.500 V13.500 H7.500 V16.500 H5Z" fill="#3f8fd0"/><path d="M2.500 5.500 H17" stroke="#fff7c8" stroke-width="1"/></svg>
 <!-- yandex browser button -->
 <div class="abs" style="left:105px;top:1px;width:43px;height:28px;margin-top:-.5px;border:1px solid #6e6a5e;border-radius:3px;background:linear-gradient(135deg,#d9d5c6 0,#cbc6b4 50%,#bcb6a2 100%);box-shadow:inset 0 0 0 1px rgba(255,255,255,.5)"></div>
 <svg class="abs" style="left:118px;top:6px" width="18" height="18" viewBox="0 0 18 18"><circle cx="9" cy="9" r="8.200" fill="#fff"/><path d="M4.500 4 L9 10.500 L13.500 4 M9 10 V15.500" stroke="#e0182d" stroke-width="2" fill="none"/></svg>
 <svg class="abs" style="left:165px;top:7px" width="16" height="16" viewBox="0 0 16 16"><path d="M1 1 H10.500 L15 8 L10.500 15 H1Z" fill="#fff" stroke="#e2ded2" stroke-width=".6"/></svg>
 <div class="abs" style="left:168.500px;top:7.500px;font-size:13px;line-height:15px;color:#d81e2c;transform:scaleX(.85);transform-origin:0 50%">Я</div>
 <!-- arduino button -->
 <div class="abs" style="left:198px;top:1px;width:43px;height:28px;border:1px solid #77736a;border-radius:3px;background:linear-gradient(135deg,#f0eee6 0,#dedbd0 45%,#cdc9bb 100%);box-shadow:inset 0 0 0 1px rgba(255,255,255,.6)"></div>
 <svg class="abs" style="left:210px;top:6px" width="18" height="18" viewBox="0 0 18 18"><circle cx="9" cy="9" r="8.700" fill="#12949a"/><circle cx="5.700" cy="9" r="2.700" fill="none" stroke="#fff" stroke-width="1.400"/><circle cx="12.300" cy="9" r="2.700" fill="none" stroke="#fff" stroke-width="1.400"/><path d="M4.500 9 H6.900 M11.100 9 H13.500 M12.300 7.800 V10.200" stroke="#fff" stroke-width="1"/></svg>
 <!-- tray -->
 <div class="abs" style="left:1128.500px;top:6px;font-size:12px;line-height:15px;color:#fff;letter-spacing:-.5px">RU</div>
 <svg class="abs" style="left:1160px;top:14px" width="8" height="5" viewBox="0 0 8 5"><path d="M0 4.600 L3.800 0 L7.600 4.600Z" fill="#fff"/></svg>
 <svg class="abs" style="left:1180px;top:7px" width="18" height="18" viewBox="0 0 18 18"><path d="M2 1.500 V16" stroke="#fff" stroke-width="1.500"/><path d="M3.500 2.500 H12.500 L11 5.500 L12.500 9 H3.500Z" fill="#fff"/><circle cx="11.500" cy="12.500" r="4" fill="#d8261c" stroke="#fff" stroke-width=".5"/><path d="M9.800 10.800 L13.200 14.200 M13.200 10.800 L9.800 14.200" stroke="#fff" stroke-width="1.300"/></svg>
 <svg class="abs" style="left:1204px;top:7px" width="16" height="18" viewBox="0 0 16 18"><rect x="1.500" y="3.500" width="8" height="12" rx="1" fill="none" stroke="#fff" stroke-width="1.400"/><rect x="4" y="1.500" width="3" height="2" fill="#fff"/><path d="M7 6 H13 V10 Q13 12 10 12 Q7 12 7 10Z" fill="#fff"/><path d="M8.500 3.500 V6 M11.500 3.500 V6 M10 12 V16" stroke="#fff" stroke-width="1.300"/></svg>
 <svg class="abs" style="left:1228px;top:7px" width="18" height="18" viewBox="0 0 18 18"><rect x="5.500" y="5" width="10.500" height="8" fill="none" stroke="#fff" stroke-width="1.500"/><path d="M8 16 H14 M11 13 V16" stroke="#fff" stroke-width="1.500"/><path d="M3 1 V8 H5.500 M1 2.500 H5 V5 H1Z" stroke="#fff" stroke-width="1.200" fill="#fff"/></svg>
 <svg class="abs" style="left:1252px;top:7px" width="18" height="18" viewBox="0 0 18 18"><path d="M1.500 6.500 H4.500 L9 2 V16 L4.500 11.500 H1.500Z" fill="#fff"/><path d="M11.500 6.500 Q13 9 11.500 11.500" stroke="#fff" stroke-width="1.200" fill="none"/></svg>
 <div class="abs" style="left:1299px;top:9px;font-size:12px;line-height:15px;color:#fff;letter-spacing:-.55px">12:51</div>
 <div class="abs" style="left:1352px;top:1px;width:14px;height:29px;border:1px solid #8f8f8c;border-right:0;background:linear-gradient(90deg,#44403e,#2c2626)"></div>
</div>
</body></html>
